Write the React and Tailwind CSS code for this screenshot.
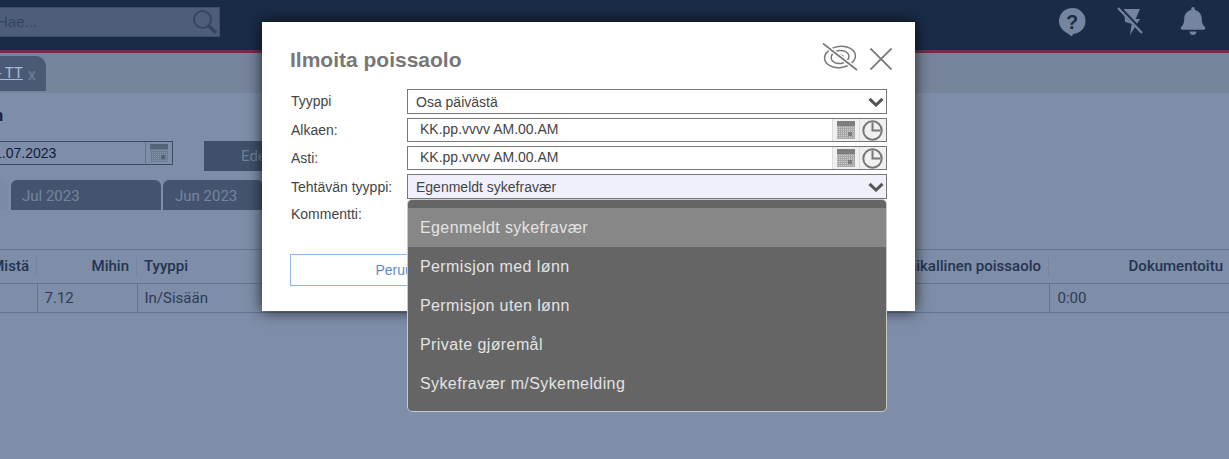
import React from "react";
import { FaBell } from "react-icons/fa";

function Chevron() {
  return (
    <svg width="16" height="10" viewBox="0 0 16 10" className="shrink-0">
      <path d="M1.500 1.800 L8 8 L14.500 1.800" fill="none" stroke="#555555" strokeWidth="3" />
    </svg>
  );
}

function CalendarIcon({ dim }) {
  const line = dim ? "#6d7c94" : "#a8a8a8";
  const bg = dim ? "#8a96a9" : "#cdcdcd";
  const top = dim ? "#55637a" : "#7e7e7e";
  const v = [1.5, 3.5, 5.5, 7.5, 9.5, 11.5, 13.5, 15.5, 17.5];
  const h = [5.5, 7.5, 9.5, 11.5, 13.5, 15.5, 17.5];
  return (
    <svg width="18" height="18" viewBox="0 0 18 18" className="shrink-0">
      <rect x="0" y="0" width="18" height="18" fill={bg} />
      <rect x="0" y="0" width="18" height="5" fill={top} />
      {v.map((x) => (
        <line key={x} x1={x} y1="5" x2={x} y2="18" stroke={line} strokeWidth="1" />
      ))}
      {h.map((y) => (
        <line key={y} x1="0" y1={y} x2="18" y2={y} stroke={line} strokeWidth="1" />
      ))}
      <rect x="11" y="11" width="4" height="4" fill={top} />
    </svg>
  );
}

function ClockIcon() {
  return (
    <svg width="21" height="21" viewBox="0 0 21 21" className="shrink-0">
      <circle cx="10.500" cy="10.500" r="9.200" fill="none" stroke="#777777" strokeWidth="2" />
      <path d="M10.500 2.500 V10.500 H18.500" fill="none" stroke="#777777" strokeWidth="2" />
    </svg>
  );
}

function HelpIcon() {
  return (
    <svg width="28" height="30" viewBox="0 0 28 30">
      <path d="M14 1 A13 13 0 1 1 15 27 L14 29.500 L8.500 25.800 A13 13 0 0 1 14 1 Z" fill="#76859f" />
      <text x="14" y="21.500" textAnchor="middle" fontSize="20" fontWeight="700" fill="#1a2b47" fontFamily="Liberation Sans, sans-serif">?</text>
    </svg>
  );
}

function BoltOffIcon() {
  return (
    <svg width="28" height="30" viewBox="0 0 28 30">
      <path d="M8 2 H24 L19.700 12 H24 L14 28 L15.700 17 L9 14.700 Z" fill="#76859f" />
      <line x1="3" y1="0.500" x2="27.500" y2="26" stroke="#1a2b47" strokeWidth="4" />
      <line x1="2" y1="1" x2="26" y2="26" stroke="#76859f" strokeWidth="2.200" />
    </svg>
  );
}

function EyeOffIcon() {
  return (
    <svg width="36" height="28" viewBox="0 0 36 28" fill="none" stroke="#777777" strokeWidth="1.500">
      <ellipse cx="18" cy="14" rx="15.500" ry="10.500" transform="rotate(-8 18 14)" />
      <ellipse cx="18" cy="14" rx="9" ry="6.500" transform="rotate(-8 18 14)" />
      <path d="M14.500 14 C15 11.800 19 11 21.500 13.500" />
      <line x1="1" y1="0.500" x2="35" y2="27" stroke="#ffffff" strokeWidth="4.500" />
      <line x1="1" y1="0.500" x2="35" y2="27" strokeWidth="1.700" />
    </svg>
  );
}

function DateField() {
  return (
    <div className="flex h-6 items-stretch border border-[#777777] bg-white">
      <span className="flex-1 pl-3 text-sm leading-[21px] text-[#444444]">KK.pp.vvvv AM.00.AM</span>
      <span className="flex w-[27px] items-center justify-center border-l border-[#dcdcdc] bg-[#f0f0f0]">
        <CalendarIcon />
      </span>
      <span className="flex w-[27px] items-center justify-center border-l border-[#dcdcdc] bg-[#f0f0f0] pr-px">
        <ClockIcon />
      </span>
    </div>
  );
}

function Field({ label, children, className }) {
  return (
    <div className={"flex " + className}>
      <span className="w-[117px] shrink-0 pl-px text-sm leading-[24px] text-[#444444]">{label}</span>
      <div className="relative flex-1">{children}</div>
    </div>
  );
}

const options = ["Permisjon med lønn", "Permisjon uten lønn", "Private gjøremål", "Sykefravær m/Sykemelding"];

function Modal() {
  return (
    <div className="absolute left-[262px] top-[22px] h-[289px] w-[653px] bg-white pl-7 pr-7 font-['Liberation_Sans',sans-serif] shadow-[0_0_14px_rgba(0,0,0,0.75)]">
      <div className="flex h-[67px] items-start justify-between">
        <h1 className="mt-[26px] text-[21px] leading-6 font-bold text-[#777777]">Ilmoita poissaolo</h1>
        <div className="mt-[21px] -mr-[5px] flex items-start gap-[12px]">
          <EyeOffIcon />
          <svg width="22" height="22" viewBox="0 0 22 22" stroke="#777777" strokeWidth="1.800" className="mt-[5px]">
            <line x1="0.500" y1="0.500" x2="21.500" y2="21.500" />
            <line x1="21.500" y1="0.500" x2="0.500" y2="21.500" />
          </svg>
        </div>
      </div>
      <Field label="Tyyppi" className="h-[25px]">
        <div className="flex h-[25px] items-center justify-between border border-[#777777] bg-white pr-[2px] pl-2 text-sm text-[#444444]">
          <span>Osa päivästä</span>
          <Chevron />
        </div>
      </Field>
      <Field label="Alkaen:" className="mt-1 h-6">
        <DateField />
      </Field>
      <Field label="Asti:" className="mt-1 h-6">
        <DateField />
      </Field>
      <Field label="Tehtävän tyyppi:" className="mt-1 h-[25px] [&>span]:pt-px">
        <div className="flex h-[25px] items-center justify-between border border-[#777777] bg-[#f0f0fc] pr-[2px] pl-2 text-sm text-[#444444]">
          <span>Egenmeldt sykefravær</span>
          <Chevron />
        </div>
        <div className="absolute top-[25px] left-0 z-10 w-full rounded-[5px] border border-[#c9c9c9] bg-[#656565] pt-2 pb-2 text-base tracking-[0.4px] text-[#e3e3e3]">
          <div className="flex h-[39px] items-center bg-[#878787] pl-3">Egenmeldt sykefravær</div>
          {options.map((o) => (
            <div key={o} className="flex h-[39px] items-center pl-3">{o}</div>
          ))}
        </div>
      </Field>
      <Field label="Kommentti:" className="mt-[3px] h-[24px]">
        <div />
      </Field>
      <div className="mt-[28px] flex h-8 w-[220px] items-center justify-center border border-[#8db6ea] text-sm text-[#5c8bc9]">
        Peruuta
      </div>
    </div>
  );
}

function HeadCell({ children, align }) {
  return (
    <th className="p-0 font-medium">
      <div className={"flex h-[18px] items-center border-r border-[#75849d] px-[7px] " + align}>{children}</div>
    </th>
  );
}

export default function App() {
  return (
    <div className="relative h-[459px] w-[1229px] overflow-hidden bg-[#7e8da8] font-['Roboto',sans-serif]">
      <header className="flex h-[53px] items-start justify-between border-b-[3px] border-[#722e4b] bg-[#1a2b47]">
        <div className="mt-[7px] -ml-2 flex h-[30px] w-[228px] items-center justify-between border border-[#3f506b] bg-[#4e5e79] pr-[1px] pl-[4px]">
          <span className="font-['Liberation_Sans',sans-serif] text-[15px] text-[#36465f]">Hae...</span>
          <svg width="26" height="26" viewBox="0 0 26 26" fill="none" stroke="#36465f">
            <circle cx="10.500" cy="10.500" r="8.500" strokeWidth="2" />
            <line x1="16.500" y1="16.500" x2="24" y2="24" strokeWidth="3.500" />
          </svg>
        </div>
        <div className="mt-[7px] mr-[22px] flex items-start">
          <HelpIcon />
          <span className="ml-[30px]"><BoltOffIcon /></span>
          <span className="ml-[35px]"><FaBell size={28} color="#76859f" /></span>
        </div>
      </header>

      <nav className="flex h-[40px] items-start bg-[#76849c] pt-[3px]">
        <div className="flex h-[35px] w-[46px] items-center justify-end rounded-tr-[10px] bg-[#4a5a74] pr-[10px] text-[15px]">
          <span className="shrink-0 whitespace-nowrap text-[#a4bcd4] underline">- TT</span>
          <span className="ml-[5px] pt-[3px] text-base font-bold text-[#66758f]">x</span>
        </div>
      </nav>

      <section className="h-[48px] pt-[11px] font-['Liberation_Sans',sans-serif] text-base font-bold text-[#0d1c3d]">
        <span className="-ml-[18px] block">Un</span>
      </section>

      <div className="flex items-start">
        <div className="-ml-2 flex h-6 w-[181px] items-center justify-between border border-[#3a4a63] bg-[#7e8da8] pl-[1px] font-['Liberation_Sans',sans-serif] text-sm text-[#0d1c3d]">
          <span>1.07.2023</span>
          <span className="flex h-full w-[27px] items-center justify-center border-l border-[#65748c]"><CalendarIcon dim /></span>
        </div>
        <div className="ml-[31px] flex h-[30px] w-[60px] items-center overflow-hidden bg-[#40506b] pl-[37px] text-[15px] text-[#6f7f99]">
          Edellinen
        </div>
      </div>

      <div className="mt-[9px] flex h-[30px] items-stretch text-[15px] text-[#76859f]">
        <div className="w-[8px] rounded-tr-[8px] bg-[#7c8aa5]" />
        <div className="ml-[3px] flex w-[150px] items-center rounded-t-[6px] bg-[#44546e] pt-[2px] pl-[11px]">Jul 2023</div>
        <div className="ml-[2px] flex w-[100px] items-center rounded-t-[6px] bg-[#44546e] pt-[2px] pl-3">Jun 2023</div>
      </div>

      <table className="mt-[39px] w-full table-fixed border-collapse border-t border-[#64748e] text-[15px]">
        <colgroup>
          <col className="w-[37px]" />
          <col className="w-[100px]" />
          <col />
          <col className="w-[180px]" />
        </colgroup>
        <thead>
          <tr className="h-[34px] border-b border-[#64748e] text-[#24344f]">
            <HeadCell align="justify-end">Mistä</HeadCell>
            <HeadCell align="justify-end">Mihin</HeadCell>
            <HeadCell align="justify-between">
              <span>Tyyppi</span>
              <span>Paikallinen poissaolo</span>
            </HeadCell>
            <th className="p-0 pr-[6px] text-right font-medium">Dokumentoitu</th>
          </tr>
        </thead>
        <tbody>
          <tr className="h-[29px] border-b border-[#64748e] text-[#2d3b55]">
            <td className="border-r border-[#64748e]" />
            <td className="border-r border-[#64748e] pl-[7px]">7.12</td>
            <td className="pl-[7px]">In/Sisään</td>
            <td className="border-l border-[#64748e] pl-2">0:00</td>
          </tr>
        </tbody>
      </table>

      <Modal />
    </div>
  );
}
